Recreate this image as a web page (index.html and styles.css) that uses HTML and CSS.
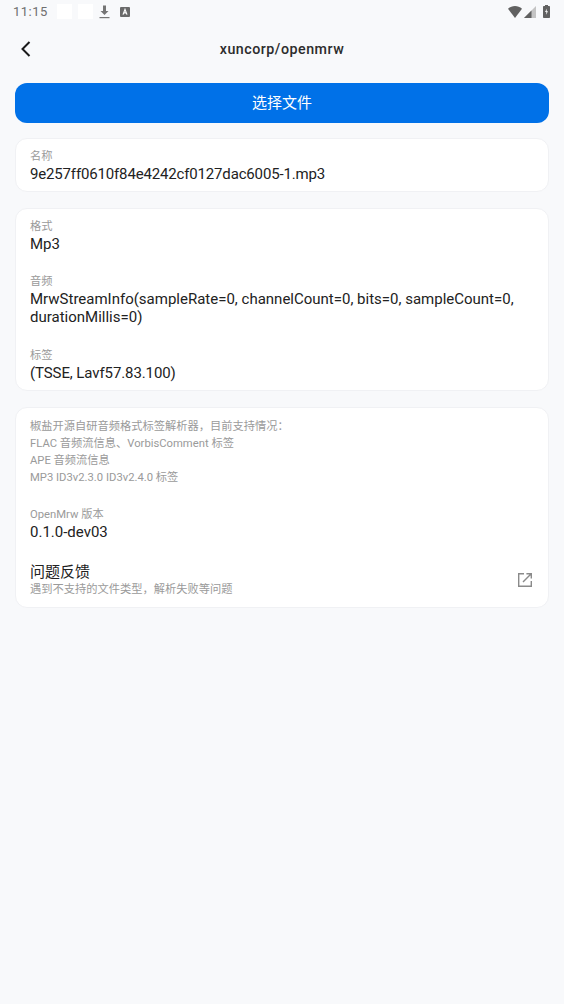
FILE: index.html
```html
<!DOCTYPE html>
<html lang="zh-CN">
<head>
  <meta charset="UTF-8" />
  <meta name="viewport" content="width=device-width, initial-scale=1.0"/>
  <title>xuncorp/openmrw</title>
  <link rel="stylesheet" href="styles.css">
</head>
<body>

<!-- Status bar -->
<div class="status-bar">
  <span class="clock">11:15</span>
  <span class="blank-icon"></span>
  <span class="blank-icon"></span>
  <svg class="status-icon" width="11" height="14" viewBox="0 0 11 14">
    <path d="M4 0.5h3v5.5h2.5l-4 4-4-4h2.5z" fill="#757575"/>
    <rect x="0.5" y="12" width="10" height="1.2" fill="#757575"/>
  </svg>
  <svg class="status-icon a-icon" width="10" height="10" viewBox="0 0 10 10">
    <rect width="10" height="10" rx="1" fill="#6a6a6a"/>
    <path d="M3 7.6 5 2.4 7 7.6M3.8 5.9h2.4" fill="none" stroke="#fff" stroke-width="1.2"/>
  </svg>
  <span class="status-right">
    <svg width="14" height="12" viewBox="0 0 14 12"><path d="M0 2.8C4-0.9 10-0.9 14 2.8L7 12z" fill="#616161"/></svg>
    <svg width="12" height="12" viewBox="0 0 12 12"><path d="M12 0V12H0z" fill="#c4c4c4"/><path d="M7.5 4.5V12H0z" fill="#616161"/></svg>
    <svg class="battery" width="7" height="13" viewBox="0 0 7 13"><path d="M2 0h3v1h1.2q.8 0 .8.8V12.2q0 .8-.8.8H.8Q0 13 0 12.2V1.8Q0 1 .8 1H2z" fill="#616161"/><path d="M4 3.4 2 7h1.4L3 9.8 5 6.2H3.6z" fill="#fff"/></svg>
  </span>
</div>

<!-- Title bar -->
<header class="top-bar">
  <svg class="back" width="12" height="16" viewBox="0 0 12 16"><path d="M9.5 1 2.5 8l7 7" fill="none" stroke="#1a1a1a" stroke-width="2"/></svg>
  <h1>xuncorp/openmrw</h1>
</header>

<div class="container">
  <button class="pick-button">选择文件</button>

  <div class="card">
    <div class="item">
      <div class="label">名称</div>
      <div class="value file-name">9e257ff0610f84e4242cf0127dac6005-1.mp3</div>
    </div>
  </div>

  <div class="card">
    <div class="item">
      <div class="label">格式</div>
      <div class="value">Mp3</div>
    </div>
    <div class="item">
      <div class="label">音频</div>
      <div class="value">MrwStreamInfo(sampleRate=0, channelCount=0, bits=0, sampleCount=0, durationMillis=0)</div>
    </div>
    <div class="item">
      <div class="label">标签</div>
      <div class="value tags">(TSSE, Lavf57.83.100)</div>
    </div>
  </div>

  <div class="card">
    <div class="item intro">
      <div>椒盐开源自研音频格式标签解析器，目前支持情况：</div>
      <div>FLAC 音频流信息、VorbisComment 标签</div>
      <div>APE 音频流信息</div>
      <div>MP3 ID3v2.3.0 ID3v2.4.0 标签</div>
    </div>
    <div class="item">
      <div class="label">OpenMrw 版本</div>
      <div class="value">0.1.0-dev03</div>
    </div>
    <div class="item feedback">
      <div>
        <div class="value">问题反馈</div>
        <div class="label">遇到不支持的文件类型，解析失败等问题</div>
      </div>
      <svg width="14" height="14" viewBox="0 0 14 14" fill="none" stroke="#8a8a8a" stroke-width="1.4">
        <path d="M6 .8H.7v12.5h12.6V8"/>
        <path d="M8.4.7h4.9v4.9M13.2.8 5 9"/>
      </svg>
    </div>
  </div>
</div>

</body>
</html>
```

FILE: styles.css
```css
body {
  font-family: Roboto, "Noto Sans CJK SC", sans-serif;
  margin: 0;
  padding: 0;
  background: #f8f9fb;
  color: #222;
}
.status-bar {
  height: 23px;
  display: flex;
  align-items: center;
  padding: 0 14px 0 13px;
}
.clock {
  font-size: 13px;
  letter-spacing: 0.5px;
  color: #6f6f6f;
  margin-right: 9px;
}
.blank-icon {
  width: 15px;
  height: 15px;
  background: #fff;
  margin-right: 6px;
}
.status-icon {
  margin-right: 10px;
}
.status-right {
  margin-left: auto;
  display: flex;
  align-items: center;
  gap: 2px;
}
.battery {
  margin-left: 5px;
}
.top-bar {
  height: 51px;
  display: flex;
  align-items: center;
  justify-content: center;
  position: relative;
}
.top-bar h1 {
  font-size: 14.25px;
  font-weight: 500;
  margin: 0;
  letter-spacing: 0.5px;
  color: #2c2c2c;
}
.back {
  position: absolute;
  left: 20px;
  top: 18px;
}
.container {
  padding: 9px 15px 0;
  display: flex;
  flex-direction: column;
  gap: 16px;
}
.pick-button {
  height: 40px;
  margin-bottom: -1px;
  padding: 0 0 3px;
  border: none;
  border-radius: 12px;
  background: #0071e8;
  color: #fff;
  font-family: inherit;
  font-size: 15px;
}
.card {
  background: #fff;
  border: 1px solid #f0f1f4;
  border-radius: 12px;
  padding: 9.5px 14px 8.5px;
  display: flex;
  flex-direction: column;
  gap: 21.5px;
}
.label {
  font-size: 11.25px;
  line-height: 16px;
  color: #9a9a9a;
}
.value {
  font-size: 15px;
  line-height: 18px;
}
.file-name {
  letter-spacing: -0.16px;
}
.tags {
  letter-spacing: -0.1px;
}
.intro {
  font-size: 11.25px;
  line-height: 17px;
  color: #9a9a9a;
}
.feedback {
  display: flex;
  align-items: center;
  justify-content: space-between;
  padding: 0 2px 1px 0;
}
.feedback .label {
  margin-top: 1px;
}
```
